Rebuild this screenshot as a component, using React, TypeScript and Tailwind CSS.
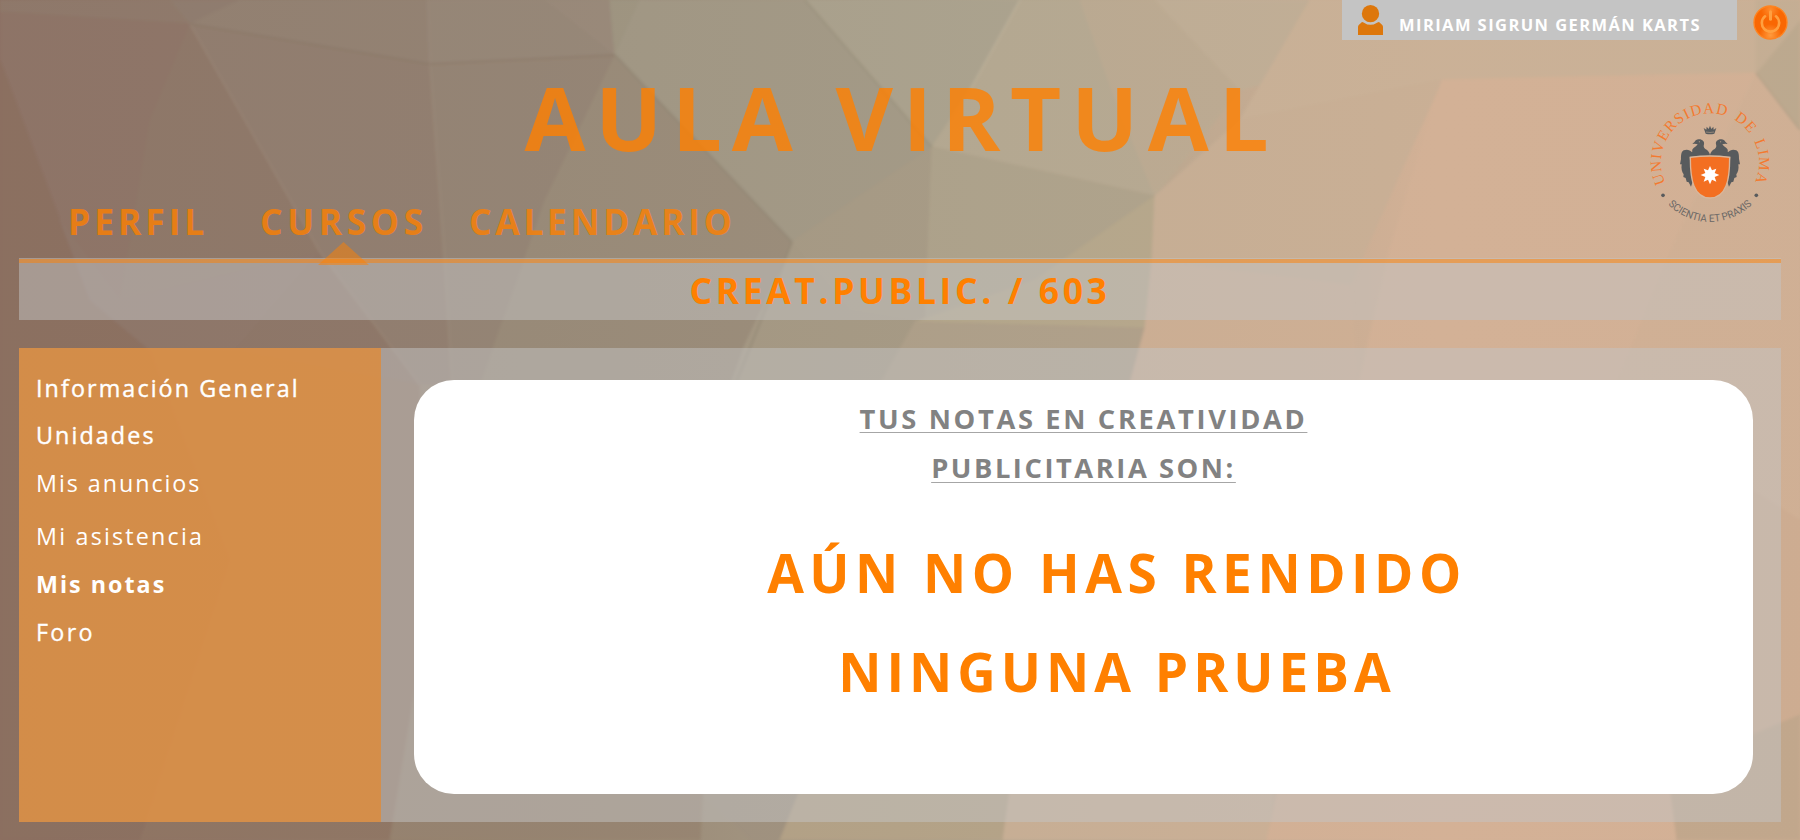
import React from "react";

const FACETS: [string, string][] = [
  // left side
  ["0,0 170,0 190,24 0,12", "#8f7a6c"],
  ["170,0 240,0 190,24", "#8f7d6f"],
  ["240,0 428,0 430,64 190,24", "#938273"],
  ["0,12 190,24 150,120 120,300 60,330 0,60", "#8e7568"],
  ["190,24 320,252 420,385 250,345 120,300 150,120", "#8e7869"],
  ["0,60 60,220 90,300 150,350 230,560 140,840 0,840", "#8b6f60"],
  ["60,220 120,300 320,252 235,350 150,350 90,300", "#8e776a"],
  ["320,252 235,350 330,450 420,385", "#8d7667"],
  ["190,24 430,64 445,260 452,385 420,385 320,252", "#917e6f"],
  // centre left
  ["428,0 545,0 615,55 430,64", "#968778"],
  ["545,0 610,0 615,55", "#99897a"],
  ["610,0 645,0 615,55", "#9f9682"],
  ["430,64 615,55 545,200 480,385 452,385", "#948474"],
  ["615,55 792,242 785,260 725,400 480,385 545,200", "#998b79"],
  ["640,0 805,0 932,147 792,242 615,55", "#a29986"],
  ["805,0 1020,0 970,90 932,147", "#aaa28e"],
  ["785,260 792,242 915,322 860,420 725,400 745,345", "#a59984"],
  ["792,242 932,147 925,322 850,310", "#a69a85"],
  // centre
  ["1020,0 1080,0 1112,90 1155,196 932,147 970,90", "#b5a992"],
  ["1080,0 1155,0 1240,90 1200,140 1155,196 1112,90", "#bbaa92"],
  ["1155,0 1310,0 1260,85 1240,90", "#bfae96"],
  ["932,147 1155,196 1035,280 925,322", "#ada28b"],
  ["1155,196 1152,260 1145,328 915,322 1035,280", "#b5a78b"],
  ["915,322 1145,328 1120,420 930,420 860,420", "#ae9f89"],
  // right side
  ["1310,0 1800,0 1756,73 1442,80 1240,120", "#c9b197"],
  ["1240,120 1442,80 1350,285 1152,260 1155,196", "#c8af95"],
  ["1152,260 1350,285 1360,400 1120,420 1145,328", "#ceaf94"],
  ["1442,80 1756,73 1680,230 1610,400 1355,400 1390,250", "#d3b196"],
  ["1756,73 1800,130 1800,520 1610,400 1680,230", "#d0b095"],
  ["1756,73 1800,20 1800,130", "#b9a88e"],
  ["1756,0 1800,0 1800,20 1756,73", "#c3ae94"],
  // lower half
  ["150,350 235,350 420,385 430,600 390,840 140,840 230,560", "#8f7463"],
  ["420,385 480,385 725,400 700,840 390,840 430,600", "#96836f"],
  ["700,790 725,400 860,420 800,790 780,840 750,840", "#9f917f"],
  ["800,790 860,420 1120,420 1010,790 1003,840 780,840", "#b5a387"],
  ["1120,420 1360,400 1300,600 1267,840 1003,840 1010,790", "#cbb096"],
  ["1360,400 1610,400 1640,600 1670,790 1677,840 1267,840", "#d4b196"],
  ["1610,400 1800,520 1800,720 1668,770 1640,600", "#cdac91"],
  ["1668,770 1800,715 1800,840 1677,840", "#bfa68b"],
];

const SEAMS: [string, string][] = [
  ["190,24 320,252 420,385", "#9b8979"],
  ["428,0 430,64 445,260 452,385", "#9d8c7d"],
  ["190,24 430,64 615,55", "#897767"],
  ["615,55 792,242", "#8b806e"],
  ["792,242 785,260 735,385", "#8b806e"],
  ["805,0 932,147", "#958c78"],
  ["1756,73 1800,130", "#ab9b83"],
  ["1020,0 970,90", "#c0b59e"],
];

function Backdrop() {
  return (
    <svg className="absolute inset-0 h-full w-full" viewBox="0 0 1800 840" preserveAspectRatio="none" aria-hidden="true">
      <defs>
        <linearGradient id="base" x1="0" x2="1" y1="0" y2="0">
          <stop offset="0" stopColor="#8b6e60" />
          <stop offset="0.3" stopColor="#958573" />
          <stop offset="0.55" stopColor="#aea28c" />
          <stop offset="0.8" stopColor="#d3b196" />
          <stop offset="1" stopColor="#cdad92" />
        </linearGradient>
        <filter id="soft" x="0" y="0" width="1" height="1">
          <feGaussianBlur stdDeviation="1.6" />
        </filter>
      </defs>
      <rect width="1800" height="840" fill="url(#base)" />
      <g filter="url(#soft)">
        {FACETS.map(([points, color]) => (
          <polygon key={points} points={points} fill={color} stroke={color} strokeWidth="1" />
        ))}
        {SEAMS.map(([points, color]) => (
          <polyline key={points} points={points} fill="none" stroke={color} strokeWidth="2" opacity="0.6" />
        ))}
      </g>
      <rect width="1800" height="840" fill="url(#base)" opacity="0.15" />
    </svg>
  );
}

function PersonIcon() {
  return (
    <svg className="h-[30px] w-[25px]" viewBox="0 0 75 90" fill="#dd770c" aria-hidden="true">
      <circle cx="37.5" cy="26" r="26" />
      <path d="M0 90V66Q0 62 3 59L12 51Q15 51 18 53Q37 66 57 53Q60 51 63 51L72 59Q75 62 75 66V90Z" />
    </svg>
  );
}

function PowerIcon() {
  return (
    <svg className="h-[35px] w-[35px]" viewBox="0 0 105 105" aria-hidden="true">
      <defs>
        <radialGradient id="glowBottom" cx="0.5" cy="0.9" r="0.35">
          <stop offset="0" stopColor="#ff9a3d" />
          <stop offset="1" stopColor="#ff9a3d" stopOpacity="0" />
        </radialGradient>
        <radialGradient id="glowTop" cx="0.5" cy="0.1" r="0.3">
          <stop offset="0" stopColor="#ff8c2c" />
          <stop offset="1" stopColor="#ff8c2c" stopOpacity="0" />
        </radialGradient>
      </defs>
      <circle cx="52.5" cy="52.5" r="49.5" fill="#f96703" stroke="#ff8420" strokeWidth="4" />
      <circle cx="52.5" cy="52.5" r="48" fill="url(#glowBottom)" />
      <circle cx="52.5" cy="52.5" r="48" fill="url(#glowTop)" />
      <path d="M36 34A26 26 0 1 0 69 34" fill="none" stroke="#ffa040" strokeWidth="8" strokeLinecap="round" />
      <path d="M52.5 20V43" stroke="#ffa040" strokeWidth="9" strokeLinecap="round" />
    </svg>
  );
}

function Eagle() {
  return (
    <path
      fill="#585b5d"
      d="M240 210C238 202 234 196 226 192C221 188 220 184 222 178C224 170 217 163 208 163C202 162 196 165 194 170L187 177L194 176L203 178C200 184 192 187 188 192C185 196 188 200 186 202C180 194 170 192 161 196C153 201 153 212 153 222L150 238L155 238C153 252 156 262 161 268L160 276L167 279L170 290L176 292L183 305L188 290L182 250L179 215L240 212Z"
    />
  );
}

function UniversityLogo() {
  return (
    <svg className="h-[150px] w-[170px]" viewBox="0 0 510 450" role="img" aria-label="Universidad de Lima">
      <defs>
        <path id="ringTop" d="M106.8 294.1A147 147 0 1 1 374.3 291.8" />
        <path id="ringBottom" d="M114.1 358.6A178 178 0 0 0 372 352" />
      </defs>
      <text fill="#f37a30" fontSize="46" wordSpacing="8" fontFamily="Liberation Serif, serif">
        <textPath href="#ringTop" textLength="586" lengthAdjust="spacing">UNIVERSIDAD DE LIMA</textPath>
      </text>
      <text fill="#6b6866" fontSize="31" fontFamily="Roboto, sans-serif">
        <textPath href="#ringBottom" textLength="280" lengthAdjust="spacingAndGlyphs">SCIENTIA ET PRAXIS</textPath>
      </text>
      <circle cx="99" cy="331" r="5.5" fill="#585b5d" />
      <circle cx="379" cy="331" r="5.5" fill="#585b5d" />
      <path fill="#585b5d" d="M227 146L221 129L229 134L230 125L236 132L240 122L244 132L250 125L251 134L259 129L253 146Q240 149 227 146Z" />
      <path stroke="#d0b095" strokeWidth="1.5" d="M228 141Q240 144 252 141" fill="none" />
      <Eagle />
      <g transform="matrix(-1 0 0 1 480 0)">
        <Eagle />
      </g>
      <circle cx="208" cy="170" r="1.6" fill="#d0b095" />
      <circle cx="272" cy="170" r="1.6" fill="#d0b095" />
      <path
        d="M181 217Q240 209 299 217C299 258 297 282 288 303C278 328 260 339 240 339C220 339 202 328 192 303C183 282 181 258 181 217Z"
        fill="#f36f21"
        stroke="#d9b79c"
        strokeWidth="4"
      />
      <path
        fill="#fff"
        d="M240 243L246 256L259 251L254 264L268 270L254 276L259 290L246 284L240 298L234 284L221 290L226 276L212 270L226 264L221 251L234 256Z"
      />
    </svg>
  );
}

export default function App() {
  return (
    <div className="relative h-[840px] w-full overflow-hidden bg-[#b1a58c] font-['Open_Sans',sans-serif]">
      <Backdrop />
      <div className="relative flex h-full flex-col">
        <div className="flex h-[40px] justify-end pr-[12px]">
          <div className="flex h-[40px] w-[395px] items-start bg-[#c4c4c4] pl-[16px] pt-[5px]">
            <PersonIcon />
            <span className="ml-[16px] mt-[9px] whitespace-nowrap text-[16.5px] leading-[21px] font-bold tracking-[1.43px] text-white">
              MIRIAM SIGRUN GERMÁN KARTS
            </span>
          </div>
          <button className="ml-[16px] h-[35px] w-[35px] shrink-0 pt-[5px]" aria-label="Cerrar sesión">
            <PowerIcon />
          </button>
        </div>

        <header className="flex h-[218px] pt-[26px]">
          <div className="w-[170px] shrink-0" />
          <div className="flex-1">
            <h1 className="pl-[3px] text-center text-[88.5px] leading-[101px] font-bold tracking-[9.8px] whitespace-nowrap text-[#ff8000]/80">
              AULA VIRTUAL
            </h1>
            <nav className="-ml-[102px] mt-[34px] grid grid-cols-[192px_209px_280px] text-[35.5px] leading-[40px] font-bold whitespace-nowrap text-[#ff8000]/80">
              <a className="tracking-[3.9px]">PERFIL</a>
              <a className="relative tracking-[4.6px]">
                CURSOS
                <svg className="absolute top-[41px] left-[57.5px] z-10 h-[23px] w-[51px]" viewBox="0 0 51 23" aria-hidden="true">
                  <path d="M25.5 0L51 23H0Z" fill="#ff8000" fillOpacity="0.5" />
                </svg>
              </a>
              <a className="tracking-[3.65px]">CALENDARIO</a>
            </nav>
          </div>
          <div className="mt-[19px] w-[170px] shrink-0">
            <UniversityLogo />
          </div>
        </header>

        <section className="mx-[19px] h-[62px] bg-[#c4c4c4]/50 pt-px">
          <div className="h-[4px] bg-[#ff8000]/50" />
          <h2 className="mt-[-2px] text-center text-[35.5px] leading-[59px] font-bold tracking-[3.6px] text-[#ff8000]">
            CREAT.PUBLIC. / 603
          </h2>
        </section>

        <main className="mx-[19px] mt-[28px] flex h-[474px] bg-[#c4c4c4]/50">
          <aside className="w-[362px] shrink-0 bg-[#ff8000]/50 pt-[20px] pl-[17px]">
            <ul className="text-[23.3px] leading-[40px] whitespace-nowrap text-white">
              <li className="tracking-[2.1px] [-webkit-text-stroke:0.4px_white]">Información General</li>
              <li className="mt-[7px] tracking-[2.1px] [-webkit-text-stroke:0.4px_white]">Unidades</li>
              <li className="mt-[8px] tracking-[1.95px]">Mis anuncios</li>
              <li className="mt-[13px] tracking-[2.2px]">Mi asistencia</li>
              <li className="mt-[8px] font-bold tracking-[2px]">Mis notas</li>
              <li className="mt-[8px] tracking-[2.3px] [-webkit-text-stroke:0.3px_white]">Foro</li>
            </ul>
          </aside>
          <div className="flex-1 pt-[32px] pr-[28px] pl-[33px]">
            <article className="h-[414px] rounded-[40px] bg-white pt-[14px] text-center whitespace-nowrap">
              <h3 className="text-[27.3px] leading-[49px] font-bold text-[#828282]">
                <span className="block tracking-[2.65px] underline decoration-[#a6a6a6] decoration-1 underline-offset-[3px] [text-decoration-skip-ink:none]">
                  TUS NOTAS EN CREATIVIDAD
                </span>
                <span className="block tracking-[2.55px] underline decoration-[#a6a6a6] decoration-1 underline-offset-[4px] [text-decoration-skip-ink:none]">
                  PUBLICITARIA SON:
                </span>
              </h3>
              <p className="mt-[31px] pl-[67px] text-[53.2px] leading-[99px] font-bold text-[#ff8000]">
                <span className="block tracking-[5.5px]">AÚN NO HAS RENDIDO</span>
                <span className="block tracking-[5px]">NINGUNA PRUEBA</span>
              </p>
            </article>
          </div>
        </main>
      </div>
    </div>
  );
}
